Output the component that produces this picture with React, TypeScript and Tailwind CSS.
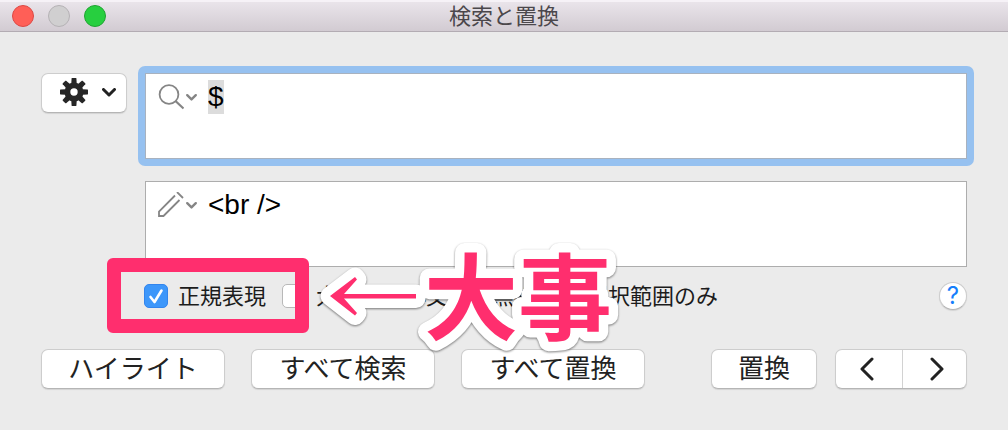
import { useEffect, useRef, useState } from "react";
import type { ReactNode } from "react";

function Chevron({ className, width = 3 }: { className: string; width?: number }) {
  return (
    <svg viewBox="0 0 14 9" className={className} fill="none" stroke="currentColor" strokeWidth={width} strokeLinecap="round" strokeLinejoin="round" aria-hidden="true">
      <path d="M1.5 1.5 7 7l5.500-5.500" />
    </svg>
  );
}

function Gear() {
  const teeth = [0, 45, 90, 135, 180, 225, 270, 315];
  return (
    <svg viewBox="-14 -14 28 28" className="size-7 text-[#262626]" aria-hidden="true">
      <circle r="6.600" fill="none" stroke="currentColor" strokeWidth="5.800" />
      {teeth.map((a) => (
        <path key={a} d="M-2.700-8.500-2.400-13.500Q-2.300-14-1.800-14H1.800Q2.300-14 2.400-13.500L2.700-8.500Z" fill="currentColor" transform={`rotate(${a})`} />
      ))}
    </svg>
  );
}

function SearchIcon() {
  return (
    <svg viewBox="0 0 26 26" className="size-[26px]" fill="none" stroke="currentColor" strokeWidth="1.800" aria-hidden="true">
      <circle cx="11" cy="10.500" r="9.400" />
      <path d="m17.500 17 8 7.500" strokeWidth="2.200" />
    </svg>
  );
}

function PencilIcon() {
  return (
    <svg viewBox="0 0 26 26" className="size-[26px]" fill="none" stroke="currentColor" strokeWidth="1.800" aria-hidden="true">
      <path d="M17 3.500 1 19.500V24H5.500L21.500 8" />
      <path d="m19 0 6 6" />
    </svg>
  );
}

function Push({ className, children }: { className: string; children: ReactNode }) {
  return (
    <button className={`h-10 rounded-[7px] border border-[#cdcdcd] border-b-[#b5b5b5] bg-white pb-1 text-[26px] leading-none text-[#222] shadow-[0_1px_1px_#0000001a] ${className}`}>
      {children}
    </button>
  );
}

function Check({ label, initial = false }: { label: string; initial?: boolean }) {
  const [on, setOn] = useState(initial);
  return (
    <label className="flex items-center gap-[10px] whitespace-nowrap text-[22px] leading-7 text-[#1c1c1c]">
      <span className="grid size-6 shrink-0">
        <input
          type="checkbox"
          checked={on}
          onChange={(e) => setOn(e.target.checked)}
          className="col-start-1 row-start-1 size-6 appearance-none rounded-[5px] border border-[#b8b8b8] bg-white checked:border-[#3385ed] checked:bg-[#3d97fa]"
        />
        {on && (
          <svg viewBox="0 0 24 24" className="pointer-events-none col-start-1 row-start-1 size-6" fill="none" stroke="white" strokeWidth="2.600" strokeLinecap="round" strokeLinejoin="round" aria-hidden="true">
            <path d="m6.500 13 4 5L17.500 6.500" />
          </svg>
        )}
      </span>
      <span className="pb-1">{label}</span>
    </label>
  );
}

const fieldText =
  "block h-[84px] w-full resize-none overflow-hidden bg-transparent pt-[6px] font-['Liberation_Sans',sans-serif] text-[28px] leading-[34px] text-black outline-none caret-transparent selection:bg-[#dcdcdcfe] selection:text-black";

export default function App() {
  const find = useRef<HTMLTextAreaElement>(null);
  useEffect(() => {
    find.current?.focus();
    find.current?.select();
  }, []);

  return (
    <div className="relative min-h-screen overflow-hidden bg-[#ebebeb] font-['Noto_Sans_CJK_JP',sans-serif]">
      <header className="grid h-8 grid-cols-[1fr_auto_1fr] items-center border-b border-[#b3acb3] bg-linear-to-b from-[#ebe6ec] to-[#d2cbd2] px-3 shadow-[inset_0_2px_0_#f6f2f7]">
        <div className="flex gap-[14px]">
          <button aria-label="閉じる" className="size-[22px] rounded-full border border-[#dc4945] bg-[#ff5f57]" />
          <button aria-label="しまう" className="size-[22px] rounded-full border border-[#b5b2b5] bg-[#d0cfd0]" />
          <button aria-label="拡大" className="size-[22px] rounded-full border border-[#1fa431] bg-[#27cf3f]" />
        </div>
        <h1 className="pb-1 text-[22px] leading-7 text-[#4b474b]">検索と置換</h1>
      </header>

      <main className="px-[41px] pt-[41px]">
        <div className="flex items-start gap-[18px]">
          <button aria-label="設定" className="flex h-10 w-[86px] shrink-0 items-center justify-end gap-[14px] rounded-[7px] border border-[#cdcdcd] border-b-[#b5b5b5] bg-white pr-[10px] pb-[2px] text-[#222] shadow-[0_1px_1px_#0000001a]">
            <Gear />
            <Chevron className="h-[9px] w-[14px]" />
          </button>
          <div className="flex min-w-0 flex-1 flex-col gap-[22px]">
            <div className="-m-[7px] rounded-[7px] bg-[#96c1f0] p-[7px]">
              <div className="flex h-[86px] border border-[#a8b2bf] bg-white pl-3">
                <button aria-label="検索履歴" className="flex h-[46px] w-[50px] shrink-0 items-center gap-[2px] text-[#858585]">
                  <SearchIcon />
                  <Chevron className="h-[7px] w-[11px]" />
                </button>
                <textarea ref={find} aria-label="検索文字列" defaultValue="$" className={fieldText} />
              </div>
            </div>
            <div className="flex h-[86px] border border-[#adadad] bg-white pl-3">
              <button aria-label="置換履歴" className="flex h-[46px] w-[50px] shrink-0 items-center gap-[2px] text-[#858585]">
                <PencilIcon />
                <Chevron className="h-[7px] w-[11px]" />
              </button>
              <textarea aria-label="置換文字列" defaultValue="<br />" className={fieldText} />
            </div>
          </div>
        </div>

        <div className="mt-[13px] flex h-8 items-center justify-between pl-[103px]">
          <div className="flex gap-4">
            <Check label="正規表現" initial />
            <Check label="大文字と小文字を無視" />
            <Check label="選択範囲のみ" />
          </div>
          <button aria-label="ヘルプ" className="size-7 shrink-0 rounded-full border border-[#cdcdcd] border-b-[#b5b5b5] bg-white font-['Inter',sans-serif] text-[24px] leading-6 text-[#157efb] shadow-[0_1px_1px_#0000001a]">
            ?
          </button>
        </div>

        <div className="mt-[37px] flex items-center justify-between">
          <div className="flex gap-[26px]">
            <Push className="w-[184px]">ハイライト</Push>
            <Push className="w-[184px]">すべて検索</Push>
            <Push className="w-[184px]">すべて置換</Push>
          </div>
          <div className="flex gap-[18px]">
            <Push className="w-[106px]">置換</Push>
            <div className="flex h-10 w-[132px] rounded-[7px] border border-[#cdcdcd] border-b-[#b5b5b5] bg-white text-[#222] shadow-[0_1px_1px_#0000001a]">
              <button aria-label="前へ" className="grid w-[67px] place-items-center border-r border-[#d2d2d2] pr-1">
                <svg viewBox="0 0 14 24" className="h-6 w-[14px]" fill="none" stroke="currentColor" strokeWidth="3" strokeLinecap="round" strokeLinejoin="round" aria-hidden="true">
                  <path d="M12 2 2 12l10 10" />
                </svg>
              </button>
              <button aria-label="次へ" className="grid flex-1 place-items-center pl-1">
                <svg viewBox="0 0 14 24" className="h-6 w-[14px]" fill="none" stroke="currentColor" strokeWidth="3" strokeLinecap="round" strokeLinejoin="round" aria-hidden="true">
                  <path d="m2 2 10 10L2 22" />
                </svg>
              </button>
            </div>
          </div>
        </div>
      </main>

      <div className="pointer-events-none absolute top-[258px] left-[107px] h-[75px] w-[202px] rounded-[6px] border-[14px] border-[#ff2e6e]" />
      <svg viewBox="310 230 330 140" className="pointer-events-none absolute top-[230px] left-[310px] h-[140px] w-[330px] drop-shadow-[0_1px_1px_#00000080]">
        <g fill="#ff2e6e" stroke="white" strokeWidth="19" strokeLinejoin="round" paintOrder="stroke">
          <text x="424" y="333" fontSize="94" fontWeight="700" fontFamily="'Noto Sans CJK JP', sans-serif">大事</text>
          <path d="M330 296 355 277 357 279.500 344 294H416V298.500H344L357 313 355 315.500Z" />
        </g>
      </svg>
    </div>
  );
}
